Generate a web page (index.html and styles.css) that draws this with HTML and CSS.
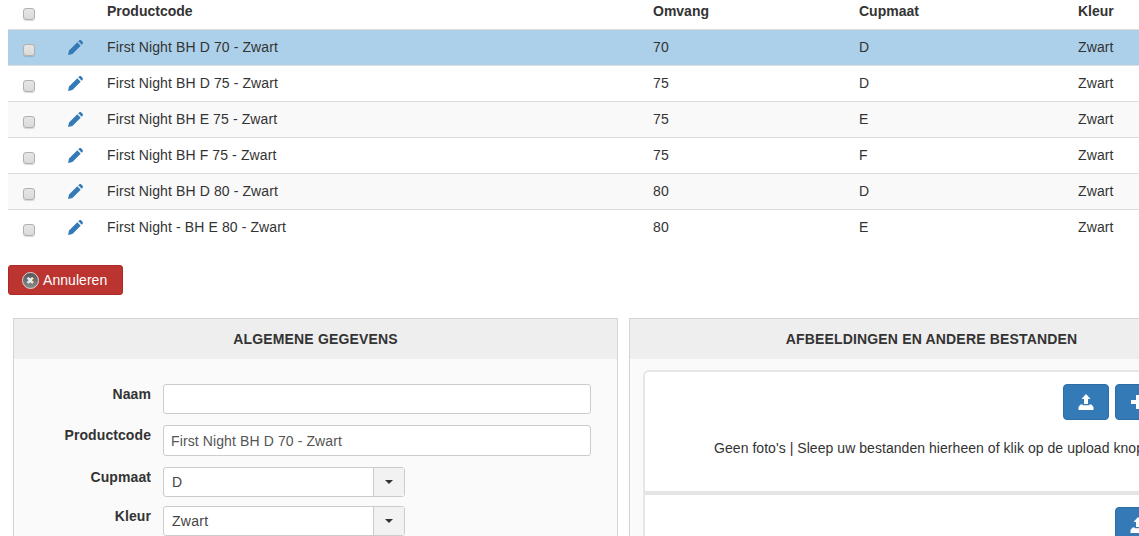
FILE: index.html
```html
<!DOCTYPE html>
<html lang="nl">
<head>
    <meta charset="UTF-8">
    <title>Producten</title>
    <link rel="stylesheet" href="styles.css">
</head>
<body>
    <svg class="sprites" width="0" height="0">
        <symbol id="pencil" viewBox="0 0 15 15">
            <path d="M0 15 L1 10.6 L9.3 2.3 L12.7 5.7 L4.4 14 Z M10.3 1.3 L11.1 .5 C11.7 -.1 12.7 -.1 13.3 .5 L14.5 1.7 C15.1 2.3 15.1 3.3 14.5 3.9 L13.7 4.7 Z"/>
        </symbol>
        <symbol id="upload" viewBox="0 0 16 16">
            <path d="M8 0 L12.5 5 L10 5 L10 10 L6 10 L6 5 L3.5 5 Z M.5 13 L2.5 10.5 L4.8 10.5 L4.8 11.2 L11.2 11.2 L11.2 10.5 L13.5 10.5 L15.5 13 L15.5 16 L.5 16 Z"/>
        </symbol>
        <symbol id="plus" viewBox="0 0 16 16">
            <path d="M6 1 L10 1 L10 6 L15 6 L15 10 L10 10 L10 15 L6 15 L6 10 L1 10 L1 6 L6 6 Z"/>
        </symbol>
    </svg>

    <div class="page">
        <table class="products">
            <colgroup>
                <col class="col-check">
                <col class="col-edit">
                <col class="col-code">
                <col class="col-size">
                <col class="col-cup">
                <col class="col-color">
            </colgroup>
            <thead>
                <tr>
                    <th><input type="checkbox" class="check"></th>
                    <th></th>
                    <th>Productcode</th>
                    <th>Omvang</th>
                    <th>Cupmaat</th>
                    <th>Kleur</th>
                </tr>
            </thead>
            <tbody>
                <tr class="selected">
                    <td><input type="checkbox" class="check"></td>
                    <td><svg class="edit"><use href="#pencil"/></svg></td>
                    <td>First Night BH D 70 - Zwart</td>
                    <td>70</td>
                    <td>D</td>
                    <td>Zwart</td>
                </tr>
                <tr>
                    <td><input type="checkbox" class="check"></td>
                    <td><svg class="edit"><use href="#pencil"/></svg></td>
                    <td>First Night BH D 75 - Zwart</td>
                    <td>75</td>
                    <td>D</td>
                    <td>Zwart</td>
                </tr>
                <tr class="odd">
                    <td><input type="checkbox" class="check"></td>
                    <td><svg class="edit"><use href="#pencil"/></svg></td>
                    <td>First Night BH E 75 - Zwart</td>
                    <td>75</td>
                    <td>E</td>
                    <td>Zwart</td>
                </tr>
                <tr>
                    <td><input type="checkbox" class="check"></td>
                    <td><svg class="edit"><use href="#pencil"/></svg></td>
                    <td>First Night BH F 75 - Zwart</td>
                    <td>75</td>
                    <td>F</td>
                    <td>Zwart</td>
                </tr>
                <tr class="odd">
                    <td><input type="checkbox" class="check"></td>
                    <td><svg class="edit"><use href="#pencil"/></svg></td>
                    <td>First Night BH D 80 - Zwart</td>
                    <td>80</td>
                    <td>D</td>
                    <td>Zwart</td>
                </tr>
                <tr>
                    <td><input type="checkbox" class="check"></td>
                    <td><svg class="edit"><use href="#pencil"/></svg></td>
                    <td>First Night - BH E 80 - Zwart</td>
                    <td>80</td>
                    <td>E</td>
                    <td>Zwart</td>
                </tr>
            </tbody>
        </table>

        <button class="cancel"><span class="cancel-icon">&#10006;</span>Annuleren</button>

        <div class="panels">
            <section class="panel">
                <h3>Algemene gegevens</h3>
                <div class="panel-body form">
                    <div class="row row-name">
                        <label>Naam</label>
                        <input type="text" class="field">
                    </div>
                    <div class="row row-code">
                        <label>Productcode</label>
                        <input type="text" class="field" value="First Night BH D 70 - Zwart">
                    </div>
                    <div class="row row-cup">
                        <label>Cupmaat</label>
                        <div class="dropdown"><span>D</span><i class="caret"></i></div>
                    </div>
                    <div class="row">
                        <label>Kleur</label>
                        <div class="dropdown"><span>Zwart</span><i class="caret"></i></div>
                    </div>
                </div>
            </section>

            <section class="panel">
                <h3>Afbeeldingen en andere bestanden</h3>
                <div class="panel-body files">
                    <div class="file-box">
                        <div class="file-block">
                            <div class="tools">
                                <button class="tool"><svg><use href="#upload"/></svg></button>
                                <button class="tool"><svg><use href="#plus"/></svg></button>
                                <button class="tool"><svg><use href="#plus"/></svg></button>
                            </div>
                            <p>Geen foto's | Sleep uw bestanden hierheen of klik op de upload knop</p>
                        </div>
                        <div class="file-block">
                            <div class="tools">
                                <button class="tool"><svg><use href="#upload"/></svg></button>
                                <button class="tool"><svg><use href="#plus"/></svg></button>
                            </div>
                        </div>
                    </div>
                </div>
            </section>
        </div>
    </div>
</body>
</html>
```

FILE: styles.css
```css
html, body {
    margin: 0;
    padding: 0;
    height: 100%;
    overflow: hidden;
}

body {
    font-family: 'Liberation Sans', Arial, sans-serif;
    font-size: 14px;
    color: #333;
    background-color: #fff;
}

.sprites {
    position: absolute;
}

.page {
    padding-left: 8px;
    height: 536px;
    overflow: hidden;
}

/* table */
.products {
    width: 1240px;
    table-layout: fixed;
    border-collapse: collapse;
}

.col-check { width: 50px; }
.col-edit { width: 41px; }
.col-code { width: 546px; }
.col-size { width: 206px; }
.col-cup { width: 219px; }

.products th {
    height: 29px;
    padding: 0 8px 7px;
    text-align: left;
    font-weight: bold;
    box-sizing: border-box;
    border-bottom: 1px solid #ddd;
}

.products td {
    height: 36px;
    padding: 0 8px;
    letter-spacing: 0.11px;
    box-sizing: border-box;
    border-top: 1px solid #ddd;
}

.products tbody tr:first-child td {
    border-top: 0;
}

.products th:first-child,
.products td:first-child {
    padding-left: 15px;
}

.selected td {
    background-color: #acd0e9;
}

.odd td {
    background-color: #f9f9f9;
}

.check {
    appearance: none;
    display: block;
    width: 12px;
    height: 12px;
    margin: 0;
    background: linear-gradient(#e6e6e6, #dadada);
    border: 1px solid #b5b0aa;
    border-radius: 3px;
    box-shadow: 0 1px 1px rgba(0, 0, 0, 0.15);
    box-sizing: border-box;
}

th .check {
    margin-top: 7px;
}

td .check {
    margin-top: 5px;
}

.edit {
    display: block;
    width: 15px;
    height: 15px;
    fill: #337ab7;
    margin-left: 2px;
    margin-top: 0;
}

/* cancel button */
.cancel {
    display: flex;
    align-items: center;
    width: 115px;
    height: 30px;
    margin: 20px 0 23px;
    padding: 0 0 0 13px;
    font-family: inherit;
    font-size: 14px;
    letter-spacing: 0.05px;
    color: #fff;
    background-color: #bb342f;
    border: 1px solid #ac2925;
    border-radius: 3px;
    box-sizing: border-box;
}

.cancel-icon {
    width: 17px;
    height: 17px;
    margin-right: 4px;
    font-size: 10px;
    line-height: 15px;
    text-align: center;
    color: #eee;
    border-radius: 50%;
    border: 1px solid #d8d8d8;
    box-sizing: border-box;
    background: linear-gradient(#555, #8a8a8a);
}

/* panels */
.panels {
    display: grid;
    grid-template-columns: 605px 605px;
    column-gap: 11px;
    margin-left: 5px;
    width: 1221px;
}

.panel {
    background-color: #fafafa;
    border: 1px solid #d5d5d5;
    border-bottom: 0;
    height: 230px;
    box-sizing: border-box;
}

.panel h3 {
    margin: 0;
    height: 40px;
    line-height: 40px;
    font-size: 14px;
    font-weight: bold;
    text-align: center;
    text-transform: uppercase;
    letter-spacing: 0.17px;
    background-color: #eee;
}

/* form */
.form {
    padding-top: 25px;
}

.row {
    display: flex;
    align-items: flex-start;
}

.row-name { margin-bottom: 11px; }
.row-code { margin-bottom: 11px; }
.row-cup { margin-bottom: 9px; }

.row label {
    width: 137px;
    margin-right: 12px;
    margin-top: 2px;
    text-align: right;
    font-weight: bold;
    letter-spacing: 0.08px;
}

.field {
    width: 428px;
    height: 30px;
    padding: 0 7px;
    font-family: inherit;
    font-size: 14px;
    letter-spacing: 0.11px;
    color: #555;
    background-color: #fff;
    border: 1px solid #ccc;
    border-radius: 3px;
    box-sizing: border-box;
}

.row-code .field {
    height: 31px;
}

.dropdown {
    display: flex;
    align-items: center;
    justify-content: space-between;
    width: 242px;
    height: 30px;
    padding-left: 8px;
    letter-spacing: 0.3px;
    color: #444;
    background-color: #fff;
    border: 1px solid #ccc;
    border-radius: 3px;
    box-sizing: border-box;
}

.caret {
    display: flex;
    align-items: center;
    justify-content: center;
    width: 31px;
    height: 100%;
    background-color: #f2f2f2;
    border-left: 1px solid #ccc;
    box-sizing: border-box;
}

.caret::before {
    content: "";
    border-top: 4px solid #333;
    border-left: 4px solid transparent;
    border-right: 4px solid transparent;
}

/* files */
.files {
    padding: 11px 13px 0;
}

.file-box {
    background-color: #fff;
    border: 2px solid #e6e6e6;
    border-bottom: 0;
    border-radius: 6px 6px 0 0;
}

.file-block {
    height: 123px;
    padding: 12px 5px 0 0;
    box-sizing: border-box;
    border-bottom: 4px solid #e4e4e4;
}

.file-block + .file-block {
    height: 60px;
    border-bottom: 0;
}

.tools {
    display: flex;
    justify-content: flex-end;
    gap: 6px;
}

.tool {
    display: flex;
    align-items: center;
    justify-content: center;
    width: 46px;
    height: 36px;
    padding: 0;
    background-color: #337ab7;
    border: 1px solid #2e6da4;
    border-radius: 4px;
}

.tool svg {
    width: 16px;
    height: 16px;
    fill: #fff;
}

.file-block p {
    margin: 20px 0 0;
    text-align: center;
    letter-spacing: 0.05px;
}
```
